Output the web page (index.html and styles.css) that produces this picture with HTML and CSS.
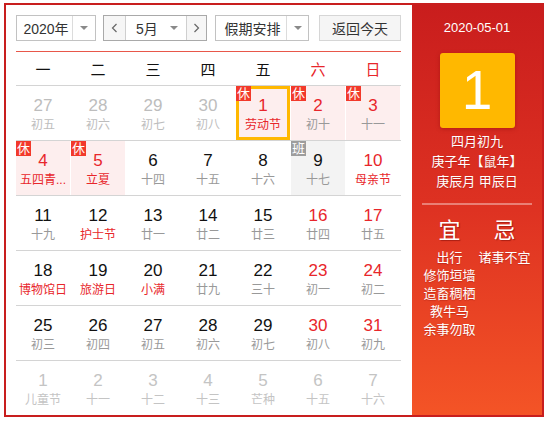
FILE: index.html
```html
<!DOCTYPE html>
<html lang="zh">
<head>
<meta charset="utf-8">
<title>万年历</title>
<link rel="stylesheet" href="styles.css">
</head>
<body>
<div class="cal">
  <div class="main">
    <div class="head">
      <div class="sel year"><span class="val">2020年</span><span class="arr"><i class="tri"></i></span></div>
      <div class="mgroup">
        <span class="nav prev"><svg width="7" height="10" viewBox="0 0 7 10"><polyline points="5.5,1 1.5,5 5.5,9" fill="none" stroke="#666" stroke-width="1.2"/></svg></span>
        <span class="msel"><span class="mval">5月</span><i class="tri"></i></span>
        <span class="nav next"><svg width="7" height="10" viewBox="0 0 7 10"><polyline points="1.5,1 5.5,5 1.5,9" fill="none" stroke="#666" stroke-width="1.2"/></svg></span>
      </div>
      <div class="sel hol-sel"><span class="val">假期安排</span><span class="arr"><i class="tri"></i></span></div>
      <button class="back">返回今天</button>
    </div>
    <div class="week">
      <span>一</span><span>二</span><span>三</span><span>四</span><span>五</span><span class="red">六</span><span class="red">日</span>
    </div>
    <div class="row">
      <div class="cell other"><div class="num">27</div><div class="lun">初五</div></div>
      <div class="cell other"><div class="num">28</div><div class="lun">初六</div></div>
      <div class="cell other"><div class="num">29</div><div class="lun">初七</div></div>
      <div class="cell other"><div class="num">30</div><div class="lun">初八</div></div>
      <div class="cell hol today we fest"><i class="badge">休</i><div class="num">1</div><div class="lun">劳动节</div></div>
      <div class="cell hol we"><i class="badge">休</i><div class="num">2</div><div class="lun">初十</div></div>
      <div class="cell hol we"><i class="badge">休</i><div class="num">3</div><div class="lun">十一</div></div>
    </div>
    <div class="row">
      <div class="cell hol we fest"><i class="badge">休</i><div class="num">4</div><div class="lun">五四青...</div></div>
      <div class="cell hol we fest"><i class="badge">休</i><div class="num">5</div><div class="lun">立夏</div></div>
      <div class="cell"><div class="num">6</div><div class="lun">十四</div></div>
      <div class="cell"><div class="num">7</div><div class="lun">十五</div></div>
      <div class="cell"><div class="num">8</div><div class="lun">十六</div></div>
      <div class="cell work"><i class="badge ban">班</i><div class="num">9</div><div class="lun">十七</div></div>
      <div class="cell we fest"><div class="num">10</div><div class="lun">母亲节</div></div>
    </div>
    <div class="row">
      <div class="cell"><div class="num">11</div><div class="lun">十九</div></div>
      <div class="cell fest"><div class="num">12</div><div class="lun">护士节</div></div>
      <div class="cell"><div class="num">13</div><div class="lun">廿一</div></div>
      <div class="cell"><div class="num">14</div><div class="lun">廿二</div></div>
      <div class="cell"><div class="num">15</div><div class="lun">廿三</div></div>
      <div class="cell we"><div class="num">16</div><div class="lun">廿四</div></div>
      <div class="cell we"><div class="num">17</div><div class="lun">廿五</div></div>
    </div>
    <div class="row">
      <div class="cell fest"><div class="num">18</div><div class="lun">博物馆日</div></div>
      <div class="cell fest"><div class="num">19</div><div class="lun">旅游日</div></div>
      <div class="cell fest"><div class="num">20</div><div class="lun">小满</div></div>
      <div class="cell"><div class="num">21</div><div class="lun">廿九</div></div>
      <div class="cell"><div class="num">22</div><div class="lun">三十</div></div>
      <div class="cell we"><div class="num">23</div><div class="lun">初一</div></div>
      <div class="cell we"><div class="num">24</div><div class="lun">初二</div></div>
    </div>
    <div class="row">
      <div class="cell"><div class="num">25</div><div class="lun">初三</div></div>
      <div class="cell"><div class="num">26</div><div class="lun">初四</div></div>
      <div class="cell"><div class="num">27</div><div class="lun">初五</div></div>
      <div class="cell"><div class="num">28</div><div class="lun">初六</div></div>
      <div class="cell"><div class="num">29</div><div class="lun">初七</div></div>
      <div class="cell we"><div class="num">30</div><div class="lun">初八</div></div>
      <div class="cell we"><div class="num">31</div><div class="lun">初九</div></div>
    </div>
    <div class="row last">
      <div class="cell other2"><div class="num">1</div><div class="lun">儿童节</div></div>
      <div class="cell other2"><div class="num">2</div><div class="lun">十一</div></div>
      <div class="cell other2"><div class="num">3</div><div class="lun">十二</div></div>
      <div class="cell other2"><div class="num">4</div><div class="lun">十三</div></div>
      <div class="cell other2"><div class="num">5</div><div class="lun">芒种</div></div>
      <div class="cell other2"><div class="num">6</div><div class="lun">十五</div></div>
      <div class="cell other2"><div class="num">7</div><div class="lun">十六</div></div>
    </div>
  </div>
  <div class="side">
    <div class="date">2020-05-01</div>
    <div class="big">1</div>
    <div class="lunar">
      <div>四月初九</div>
      <div>庚子年【鼠年】</div>
      <div>庚辰月 甲辰日</div>
    </div>
    <div class="sep"></div>
    <div class="yiji">
      <div class="col">
        <div class="yj">宜</div>
        <div class="it">出行</div>
        <div class="it">修饰垣墙</div>
        <div class="it">造畜稠栖</div>
        <div class="it">教牛马</div>
        <div class="it">余事勿取</div>
      </div>
      <div class="col">
        <div class="yj">忌</div>
        <div class="it">诸事不宜</div>
      </div>
    </div>
  </div>
</div>
</body>
</html>
```
FILE: styles.css
```css
html, body {
  margin: 0;
  padding: 0;
  background: #fff;
  overflow: hidden;
}
body {
  font-family: "Liberation Sans", "Noto Sans CJK SC", sans-serif;
  color: #111;
}
.cal {
  margin: 3px 0 0 4px;
  border: 2px solid #c81e1e;
  display: flex;
  width: 536px;
}
.main {
  width: 406px;
  box-sizing: border-box;
  padding: 10px 11px 0 10px;
}
.head {
  display: flex;
  align-items: stretch;
  height: 26px;
  padding-bottom: 10px;
  border-bottom: 1px solid #e8574a;
}
.sel {
  display: flex;
  box-sizing: border-box;
  height: 26px;
  border: 1px solid #c2c2c2;
  font-size: 14px;
  color: #333;
}
.sel .val {
  flex: 1;
  display: flex;
  align-items: center;
  justify-content: center;
  padding-left: 3px;
}
.sel .arr {
  width: 23px;
  box-sizing: border-box;
  border-left: 1px solid #dcdcdc;
  display: flex;
  align-items: center;
  justify-content: center;
}
.tri {
  display: block;
  width: 0;
  height: 0;
  border-left: 4px solid transparent;
  border-right: 4px solid transparent;
  border-top: 4px solid #8a8a8a;
}
.year {
  width: 80px;
}
.mgroup {
  margin-left: 7px;
  display: flex;
  box-sizing: border-box;
  width: 104px;
  height: 26px;
  border: 1px solid #a9a9a9;
  font-size: 14px;
  color: #333;
}
.nav {
  display: flex;
  align-items: center;
  justify-content: center;
  background: #f6f6f6;
  box-sizing: border-box;
}
.prev {
  width: 22px;
  border-right: 1px solid #cfcfcf;
}
.next {
  width: 20px;
  border-left: 1px solid #cfcfcf;
}
.msel {
  width: 60px;
  display: flex;
  align-items: center;
  justify-content: space-between;
  padding: 0 8px 0 10px;
  box-sizing: border-box;
}
.hol-sel {
  margin-left: 8px;
  width: 94px;
}
.hol-sel .arr {
  width: 22px;
}
.back {
  margin-left: 10px;
  width: 82px;
  height: 26px;
  box-sizing: border-box;
  border: 1px solid #d6d6d6;
  background: #f5f5f5;
  font-family: inherit;
  font-size: 14px;
  color: #333;
  padding: 0;
  border-radius: 0;
}
.week {
  display: grid;
  grid-template-columns: repeat(7, 54px);
  column-gap: 1px;
  height: 33px;
  align-items: center;
  text-align: center;
  font-size: 15px;
  color: #111;
  border-bottom: 1px solid #d4d4d4;
}
.red {
  color: #e8262b;
}
.row {
  display: grid;
  grid-template-columns: repeat(7, 54px);
  column-gap: 1px;
  border-bottom: 1px solid #d4d4d4;
}
.row.last {
  border-bottom: 0;
}
.cell {
  position: relative;
  height: 54px;
  box-sizing: border-box;
  padding-top: 10px;
  text-align: center;
}
.num {
  font-size: 17px;
  line-height: 20px;
  color: #111;
}
.lun {
  font-size: 12px;
  line-height: 18px;
  color: #999;
  white-space: nowrap;
}
.we .num {
  color: #e8262b;
}
.fest .lun {
  color: #e8262b;
}
.other .num, .other .lun {
  color: #bdbdbd;
}
.other2 .num, .other2 .lun {
  color: #c4c4c4;
}
.hol {
  background: #fdeeee;
}
.work {
  background: #f3f3f3;
}
.today {
  box-shadow: inset 0 0 0 3px #ffb800;
}
.badge {
  position: absolute;
  top: 0;
  left: 0;
  width: 15px;
  height: 15px;
  line-height: 15px;
  font-size: 13px;
  font-style: normal;
  color: #fff;
  background: #f2392b;
  text-align: center;
}
.badge.ban {
  background: #9d9d9d;
}
.side {
  width: 130px;
  box-sizing: border-box;
  padding: 0 10px;
  background: linear-gradient(#c91d1d, #de3222 50%, #f45426);
  color: #fff;
  text-align: center;
}
.date {
  padding-top: 14px;
  line-height: 18px;
  font-size: 13px;
}
.big {
  width: 75px;
  height: 75px;
  margin: 16px auto 0;
  background: #ffb800;
  border-radius: 3px;
  box-shadow: 0 1px 4px rgba(120, 0, 0, 0.35);
  font-size: 55px;
  line-height: 75px;
  color: #fff;
}
.lunar {
  margin-top: 4px;
  font-size: 13px;
  line-height: 20px;
  text-shadow: 0 1px 1px rgba(120, 0, 0, 0.3);
}
.sep {
  margin-top: 11px;
  height: 2px;
  background: rgba(255, 255, 255, 0.38);
}
.yiji {
  display: flex;
}
.col {
  width: 55px;
}
.yj {
  margin-top: 11px;
  font-size: 22px;
  line-height: 30px;
  margin-bottom: 3px;
  text-shadow: 1px 1px 1px rgba(100, 0, 0, 0.45);
}
.it {
  font-size: 13px;
  line-height: 18px;
  white-space: nowrap;
  text-shadow: 0 1px 1px rgba(120, 0, 0, 0.3);
}
```
